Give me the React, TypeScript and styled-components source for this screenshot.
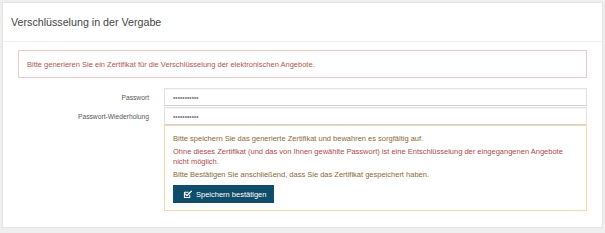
import styled, { createGlobalStyle } from "styled-components"

const GlobalStyle = createGlobalStyle`
    html, body {
        margin: 0;
        padding: 0;
        background: #efefef;
        font-family: "Liberation Sans", Arial, sans-serif;
    }
    * {
        box-sizing: border-box;
    }
`

function CheckSquareIcon() {
    return (
        <svg width="9" height="9" viewBox="0 0 16 16" fill="none">
            <path
                d="M12 8.5V13.5H2.5V4H10"
                stroke="#ffffff"
                strokeWidth="1.8"
                strokeLinejoin="round"
            />
            <path
                d="M4.5 7.5L7 10L14.5 2.5"
                stroke="#ffffff"
                strokeWidth="2.2"
                strokeLinecap="square"
            />
        </svg>
    )
}

function App() {
    return (
        <>
            <GlobalStyle />
            <Page>
                <Panel>
                    <PanelHeader>
                        <PanelTitle>Verschlüsselung in der Vergabe</PanelTitle>
                    </PanelHeader>
                    <PanelBody>
                        <Alert>
                            Bitte generieren Sie ein Zertifikat für die
                            Verschlüsselung der elektronischen Angebote.
                        </Alert>
                        <Form>
                            <Label>Passwort</Label>
                            <Input type="password" defaultValue="geheim12345" readOnly />
                            <Label>Passwort-Wiederholung</Label>
                            <Input type="password" defaultValue="geheim12345" readOnly />
                            <span />
                            <Warning>
                                <Note>
                                    Bitte speichern Sie das generierte Zertifikat und
                                    bewahren es sorgfältig auf.
                                </Note>
                                <Note $danger>
                                    Ohne dieses Zertifikat (und das von Ihnen gewählte
                                    Passwort) ist eine Entschlüsselung der eingegangenen
                                    Angebote nicht möglich.
                                </Note>
                                <Note $last>
                                    Bitte Bestätigen Sie anschließend, dass Sie das
                                    Zertifikat gespeichert haben.
                                </Note>
                                <ConfirmButton>
                                    <CheckSquareIcon />
                                    Speichern bestätigen
                                </ConfirmButton>
                            </Warning>
                        </Form>
                    </PanelBody>
                </Panel>
            </Page>
        </>
    )
}

export default App

const Page = styled.div`
    width: 605px;
    height: 233px;
    padding: 2px 2px 5px 2px;
`

const Panel = styled.div`
    width: 601px;
    height: 226px;
    background: #ffffff;
    border: 1px solid #e4e4e4;
    display: flex;
    flex-direction: column;
`

const PanelHeader = styled.div`
    height: 39px;
    display: flex;
    align-items: center;
    padding: 0 0 1px 8px;
    border-bottom: 1px solid #efefef;
`

const PanelTitle = styled.h3`
    margin: 0;
    font-size: 10.7px;
    font-weight: normal;
    color: #444444;
`

const PanelBody = styled.div`
    padding: 8px 15px 0 15px;
    display: flex;
    flex-direction: column;
`

const Alert = styled.div`
    height: 28px;
    display: flex;
    align-items: center;
    padding: 0 8px;
    border: 1px solid #ebcccc;
    color: #b0564f;
    font-size: 7.5px;
`

const Form = styled.div`
    margin-top: 10px;
    display: grid;
    grid-template-columns: 131px 1fr;
    column-gap: 15px;
    row-gap: 1px;
    align-items: center;
`

const Label = styled.label`
    text-align: right;
    font-size: 6.7px;
    color: #555555;
`

const Input = styled.input`
    height: 18px;
    width: 100%;
    padding: 0 8px;
    border: 1px solid #e2e2e2;
    border-bottom-color: #d2d2d2;
    box-shadow: inset 0 1px 1px rgba(0, 0, 0, 0.04);
    font-family: "Liberation Sans", Arial, sans-serif;
    font-size: 6.4px;
    letter-spacing: 0.1px;
    color: #777777;
    outline: none;
    background: #ffffff;
`

const Warning = styled.div`
    margin-top: -1px;
    border: 1px solid #fad4b0;
    padding: 8px 8px 7px 8px;
    display: flex;
    flex-direction: column;
    align-items: flex-start;
`

const Note = styled.p<{ $danger?: boolean; $last?: boolean }>`
    margin: 0 0 ${(p) => (p.$last ? "5px" : "3px")} 0;
    font-size: 7.5px;
    line-height: 10px;
    color: ${(p) => (p.$danger ? "#ad4a4a" : "#8a6a36")};
`

const ConfirmButton = styled.button`
    height: 18px;
    display: flex;
    align-items: center;
    gap: 4px;
    padding: 0 8px 0 10px;
    border: none;
    background: #0f4d6b;
    color: #ffffff;
    font-family: "Liberation Sans", Arial, sans-serif;
    font-size: 7.5px;
    cursor: pointer;
`
